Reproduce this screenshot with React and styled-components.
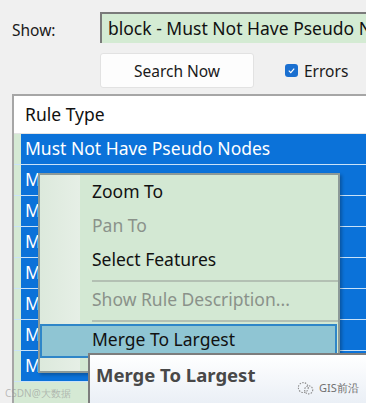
import React from 'react';
import styled, { createGlobalStyle } from 'styled-components';

const GlobalStyle = createGlobalStyle`
  html, body {
    margin: 0;
    padding: 0;
    background: #f0f0f0;
    overflow: hidden;
  }
  body {
    font-family: "Noto Sans", "Open Sans", sans-serif;
  }
`;

const rows = Array.from({ length: 8 });

const menuItems = [
    { label: 'Zoom To' },
    { label: 'Pan To', disabled: true },
    { label: 'Select Features' },
    { sep: true },
    { label: 'Show Rule Description...', disabled: true },
    { sep: true },
    { label: 'Merge To Largest', active: true },
];

const App = () => {
    return (
        <Page>
            <GlobalStyle />
            <ShowRow>
                <ShowLabel>Show:</ShowLabel>
                <Combo>block - Must Not Have Pseudo Nodes</Combo>
            </ShowRow>
            <ControlsRow>
                <SearchButton>Search Now</SearchButton>
                <CheckLabel>
                    <CheckBox>
                        <svg width="9" height="9" viewBox="0 0 10 10">
                            <path d="M2 5.2 L4.2 7.3 L8 3" fill="none" stroke="#fff" strokeWidth="1.3" />
                        </svg>
                    </CheckBox>
                    Errors
                </CheckLabel>
            </ControlsRow>
            <TablePanel>
                <HeaderRow>Rule Type</HeaderRow>
                {rows.map((_, i) => (
                    <BodyRow key={i}>
                        <Gutter />
                        <Cell>{i === 0 ? 'Must Not Have Pseudo Nodes' : 'M'}</Cell>
                    </BodyRow>
                ))}
                <Filler />
            </TablePanel>

            <ContextMenu>
                {menuItems.map((item, i) =>
                    item.sep ? (
                        <Separator key={i} />
                    ) : (
                        <MenuItem key={i} $disabled={item.disabled} $active={item.active}>
                            {item.label}
                        </MenuItem>
                    )
                )}
            </ContextMenu>

            <Tooltip>Merge To Largest</Tooltip>

            <MarkLeft>CSDN@大数据</MarkLeft>
            <MarkRight>
                <svg width="18" height="15" viewBox="0 0 20 16">
                    <circle cx="7" cy="7" r="5.5" fill="none" stroke="#8a8a8a" strokeWidth="1.2" strokeDasharray="1.6 1.4" />
                    <circle cx="13" cy="9.5" r="4.5" fill="none" stroke="#8a8a8a" strokeWidth="1.2" strokeDasharray="1.6 1.4" />
                </svg>
                GIS前沿
            </MarkRight>
        </Page>
    );
};

export default App;

const Page = styled.div`
    position: relative;
    width: 366px;
    height: 403px;
    overflow: hidden;
    padding: 12px 0 0 12px;
    box-sizing: border-box;
`

const ShowRow = styled.div`
    display: flex;
    align-items: center;
    height: 31px;
`

const ShowLabel = styled.span`
    flex: none;
    width: 88px;
    font-size: 15.5px;
    color: #1a1a1a;
    padding-top: 4px;
`

const Combo = styled.div`
    flex: none;
    width: 320px;
    height: 31px;
    box-sizing: border-box;
    border-top: 2px solid #7a7a7a;
    border-left: 2px solid #7a7a7a;
    background: #d4ebd3;
    padding-left: 6px;
    font-size: 17.5px;
    line-height: 28px;
    color: #111;
    white-space: nowrap;
    overflow: hidden;
`

const ControlsRow = styled.div`
    display: flex;
    align-items: center;
    margin: 10px 0 0 88px;
    gap: 31px;
`

const SearchButton = styled.button`
    width: 154px;
    height: 35px;
    background: #fdfdfd;
    border: 1px solid #e2e2e2;
    border-radius: 3px;
    font-family: inherit;
    font-size: 15.5px;
    color: #1a1a1a;
    padding: 0;
`

const CheckLabel = styled.label`
    display: flex;
    align-items: center;
    gap: 6px;
    font-size: 15.5px;
    color: #1a1a1a;
`

const CheckBox = styled.span`
    width: 13px;
    height: 13px;
    border-radius: 3px;
    background: #1a6fd0;
    display: flex;
    align-items: center;
    justify-content: center;
`

const TablePanel = styled.div`
    margin-top: 6px;
    border-top: 2px solid #a6a6a6;
    border-left: 2px solid #a6a6a6;
    background: #d5e9d4;
    display: flex;
    flex-direction: column;
`

const HeaderRow = styled.div`
    height: 37px;
    background: #fff;
    padding-left: 11px;
    font-size: 17.5px;
    line-height: 37px;
    color: #111;
    border-bottom: 1px solid #e4e4e4;
`

const BodyRow = styled.div`
    display: flex;
    height: 31px;
    border-bottom: 1px solid #c9e2f8;
    box-sizing: border-box;
`

const Gutter = styled.div`
    width: 7px;
    background: #d5e9d4;
`

const Cell = styled.div`
    flex: 1;
    background: #0b72d9;
    color: #fff;
    font-size: 17.5px;
    line-height: 28px;
    padding-left: 4px;
    white-space: nowrap;
`

const Filler = styled.div`
    height: 30px;
    background: #d5e9d4;
`

const ContextMenu = styled.div`
    position: absolute;
    left: 38px;
    top: 173px;
    width: 302px;
    height: 200px;
    box-sizing: border-box;
    border: 2px solid #8c9a98;
    padding-top: 1px;
    background: linear-gradient(to right, #dce9dc 0px, #e6efe6 40px, #d3e8d3 40px);
    box-shadow: 2px 2px 3px rgba(0, 0, 0, 0.25);
`

const MenuItem = styled.div`
    height: 34px;
    box-sizing: border-box;
    padding: 0 0 4px 50px;
    font-size: 17.5px;
    line-height: 26px;
    white-space: nowrap;
    color: ${(p) => (p.$disabled ? '#8a928a' : '#111')};
    border: 2px solid ${(p) => (p.$active ? '#2f86c8' : 'transparent')};
    background: ${(p) => (p.$active ? '#8fc5d3' : 'transparent')};
    margin-right: 1px;
`

const Separator = styled.div`
    height: 6px;
    margin-left: 52px;
    display: flex;
    align-items: center;
    &::after {
        content: '';
        flex: 1;
        height: 2px;
        background: #b3c0b3;
    }
`

const Tooltip = styled.div`
    position: absolute;
    left: 88px;
    top: 353px;
    width: 300px;
    height: 60px;
    box-sizing: border-box;
    border-top: 2px solid #7d7d7d;
    border-left: 2px solid #7d7d7d;
    background: linear-gradient(to bottom, #ffffff, #e6ecf4);
    padding: 7px 0 0 6px;
    font-size: 18.5px;
    font-weight: 700;
    color: #484848;
    white-space: nowrap;
`

const MarkLeft = styled.div`
    position: absolute;
    left: 5px;
    top: 386px;
    font-size: 10px;
    color: rgba(150, 150, 150, 0.6);
    white-space: nowrap;
`

const MarkRight = styled.div`
    position: absolute;
    left: 297px;
    top: 380px;
    display: flex;
    align-items: center;
    gap: 4px;
    font-size: 11px;
    color: #6f6f6f;
    white-space: nowrap;
`
